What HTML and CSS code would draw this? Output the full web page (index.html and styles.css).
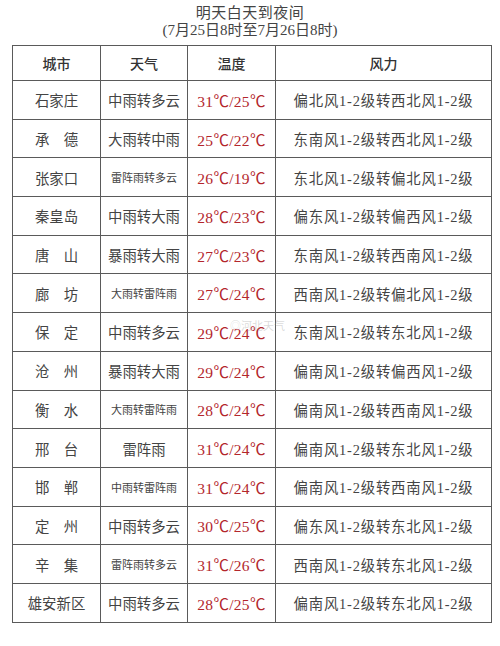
FILE: index.html
```html
<!DOCTYPE html>
<html lang="zh">
<head>
<meta charset="utf-8">
<link rel="stylesheet" href="styles.css">
</head>
<body>
<div class="page">
  <div class="title">
    <div class="t1">明天白天到夜间</div>
    <div class="t2">(7月25日8时至7月26日8时)</div>
  </div>
  <div class="wrap">
  <table class="wx">
    <colgroup><col class="c1"><col class="c2"><col class="c3"><col class="c4"></colgroup>
    <thead>
      <tr><th>城市</th><th>天气</th><th>温度</th><th>风力</th></tr>
    </thead>
    <tbody>
      <tr><td>石家庄</td><td>中雨转多云</td><td class="tmp">31℃/25℃</td><td class="wind">偏北风1-2级转西北风1-2级</td></tr>
      <tr><td>承　德</td><td>大雨转中雨</td><td class="tmp">25℃/22℃</td><td class="wind">东南风1-2级转西北风1-2级</td></tr>
      <tr><td>张家口</td><td class="sm">雷阵雨转多云</td><td class="tmp">26℃/19℃</td><td class="wind">东北风1-2级转偏北风1-2级</td></tr>
      <tr><td>秦皇岛</td><td>中雨转大雨</td><td class="tmp">28℃/23℃</td><td class="wind">偏东风1-2级转偏西风1-2级</td></tr>
      <tr><td>唐　山</td><td>暴雨转大雨</td><td class="tmp">27℃/23℃</td><td class="wind">东南风1-2级转西南风1-2级</td></tr>
      <tr><td>廊　坊</td><td class="sm">大雨转雷阵雨</td><td class="tmp">27℃/24℃</td><td class="wind">西南风1-2级转偏北风1-2级</td></tr>
      <tr><td>保　定</td><td>中雨转多云</td><td class="tmp">29℃/24℃</td><td class="wind">东南风1-2级转东北风1-2级</td></tr>
      <tr><td>沧　州</td><td>暴雨转大雨</td><td class="tmp">29℃/24℃</td><td class="wind">偏南风1-2级转偏西风1-2级</td></tr>
      <tr><td>衡　水</td><td class="sm">大雨转雷阵雨</td><td class="tmp">28℃/24℃</td><td class="wind">偏南风1-2级转西南风1-2级</td></tr>
      <tr><td>邢　台</td><td>雷阵雨</td><td class="tmp">31℃/24℃</td><td class="wind">偏南风1-2级转东北风1-2级</td></tr>
      <tr><td>邯　郸</td><td class="sm">中雨转雷阵雨</td><td class="tmp">31℃/24℃</td><td class="wind">偏南风1-2级转西南风1-2级</td></tr>
      <tr><td>定　州</td><td>中雨转多云</td><td class="tmp">30℃/25℃</td><td class="wind">偏东风1-2级转东北风1-2级</td></tr>
      <tr><td>辛　集</td><td class="sm">雷阵雨转多云</td><td class="tmp">31℃/26℃</td><td class="wind">西南风1-2级转东北风1-2级</td></tr>
      <tr><td>雄安新区</td><td>中雨转多云</td><td class="tmp">28℃/25℃</td><td class="wind">偏南风1-2级转东北风1-2级</td></tr>
    </tbody>
  </table>
  <div class="mark">◎河北天气</div>
  </div>
</div>
</body>
</html>
```
FILE: styles.css
```css
html, body {
  margin: 0;
  padding: 0;
  background: #fff;
}
.page {
  width: 500px;
  height: 646px;
  font-family: "Liberation Serif", "Noto Sans CJK SC", serif;
  color: #3c3c3c;
}
.title {
  padding-top: 5px;
  text-align: center;
  font-size: 15px;
  line-height: 17px;
  color: #444;
}
.t1 {
  letter-spacing: 0.5px;
}
.wrap {
  position: relative;
  margin: 6px 0 0 12px;
  width: 479px;
}
.wx {
  border-collapse: collapse;
  width: 479px;
  table-layout: fixed;
}
.c1 { width: 88px; }
.c2 { width: 87px; }
.c3 { width: 88px; }
.c4 { width: 216px; }
.wx th, .wx td {
  border: 1px solid #5a5a5a;
  padding: 0;
  text-align: center;
  vertical-align: middle;
  white-space: nowrap;
}
.wx th {
  height: 34px;
  font-size: 14px;
  font-weight: 500;
  color: #333;
}
.wx td {
  height: 37.7px;
  font-size: 14.4px;
  color: #444;
}
.wx td.sm {
  font-size: 11px;
}
.wx td.tmp {
  color: #b3262c;
  font-size: 15.5px;
  letter-spacing: 0.3px;
}
.wx td.wind {
  letter-spacing: 0.8px;
}
.mark {
  position: absolute;
  left: 218px;
  top: 272px;
  font-size: 11px;
  color: rgba(150,150,150,0.35);
}
```
